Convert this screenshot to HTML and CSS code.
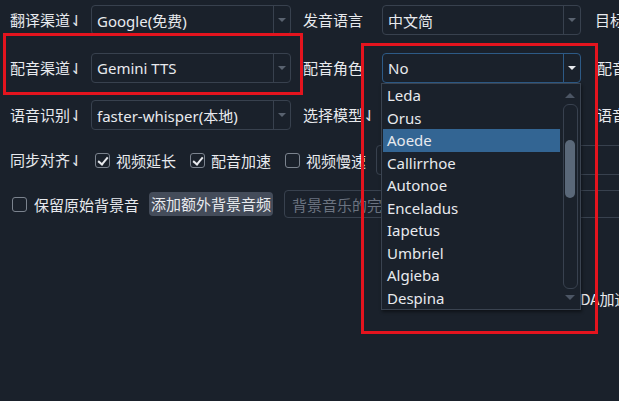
FILE: index.html
```html
<!DOCTYPE html>
<html lang="zh">
<head>
<meta charset="utf-8">
<link rel="stylesheet" href="styles.css">
</head>
<body>
<div class="panel">
  <div class="row r1">
    <span class="lbl">翻译渠道⇃</span>
    <div class="combo"><span class="val">Google(免费)</span><span class="drop"><i class="tri"></i></span></div>
    <span class="lbl lbl2">发音语言</span>
    <div class="combo combo2"><span class="val">中文简</span><span class="drop"><i class="tri"></i></span></div>
    <span class="lbl lbl3">目标语言</span>
  </div>
  <div class="row r2">
    <span class="lbl">配音渠道⇃</span>
    <div class="combo"><span class="val">Gemini TTS</span><span class="drop"><i class="tri"></i></span></div>
    <span class="lbl lbl2">配音角色</span>
    <div class="combo combo2 active"><span class="val">No</span><span class="drop"><i class="tri"></i></span></div>
    <span class="lbl lbl3 lbl3b">配音语速</span>
  </div>
  <div class="row r3">
    <span class="lbl">语音识别⇃</span>
    <div class="combo"><span class="val">faster-whisper(本地)</span><span class="drop"><i class="tri"></i></span></div>
    <span class="lbl lbl2">选择模型⇃</span>
    <div class="combo combo2"><span class="val"></span><span class="drop"><i class="tri"></i></span></div>
    <span class="lbl lbl3 lbl3b">语音切割</span>
  </div>
  <div class="row r4">
    <span class="lbl lbl4">同步对齐⇃</span>
    <label class="chk"><i class="box on"></i>视频延长</label>
    <label class="chk"><i class="box on"></i>配音加速</label>
    <label class="chk"><i class="box"></i>视频慢速</label>
    <div class="field wide"></div>
  </div>
  <div class="row r5">
    <label class="chk chk5"><i class="box"></i>保留原始背景音</label>
    <span class="btn">添加额外背景音频</span>
    <div class="field bgm"><span class="ph">背景音乐的完整路径</span></div>
  </div>
  <div class="row r6">
    <span class="cuda">CUDA加速</span>
  </div>
</div>

<div class="popup">
  <ul class="list">
    <li>Leda</li>
    <li>Orus</li>
    <li class="sel">Aoede</li>
    <li>Callirrhoe</li>
    <li>Autonoe</li>
    <li>Enceladus</li>
    <li>Iapetus</li>
    <li>Umbriel</li>
    <li>Algieba</li>
    <li>Despina</li>
  </ul>
  <div class="sbar">
    <span class="sarrow up"></span>
    <div class="groove"><div class="handle"></div></div>
    <span class="sarrow down"></span>
  </div>
</div>

<div class="mark mark1"></div>
<div class="mark mark2"></div>
</body>
</html>
```
FILE: styles.css
```css
html, body {
  margin: 0;
  padding: 0;
}
body {
  width: 619px;
  height: 401px;
  overflow: hidden;
  position: relative;
  background: #1a212b;
  color: #e8eaee;
  font-family: "Noto Sans", "Noto Sans CJK SC", sans-serif;
  font-size: 15px;
}
.panel {
  width: 900px;
  padding: 5px 0 0 10px;
}
.row {
  display: flex;
  align-items: center;
  height: 30px;
  white-space: nowrap;
}
.r2 { margin-top: 18px; }
.r3 { margin-top: 17px; }
.r4 { margin-top: 15px; }
.r5 { margin-top: 15px; height: 28px; }
.r6 { margin-top: 69px; height: 22px; }

.lbl {
  display: inline-block;
  width: 81px;
  line-height: 30px;
  font-family: "Noto Sans CJK SC", sans-serif;
}
.lbl2 { margin-left: 12px; width: 79px; }
.lbl3 { margin-left: 14px; }
.lbl3b { margin-left: 16px; }
.lbl4 { width: 85px; }

.combo {
  width: 200px;
  height: 30px;
  box-sizing: border-box;
  border: 1px solid #38414e;
  border-radius: 4px;
  display: flex;
  align-items: center;
  padding-left: 5px;
  flex: none;
}
.combo2 { width: 199px; }
.combo .val { flex: 1; overflow: hidden; }
.combo .drop {
  width: 16px;
  height: 100%;
  border-left: 1px solid #38414e;
  display: flex;
  align-items: center;
  justify-content: center;
}
.tri {
  width: 0;
  height: 0;
  border-left: 4px solid transparent;
  border-right: 4px solid transparent;
  border-top: 4px solid #59626f;
}
.combo.active { border-color: #2d5a86; }
.combo.active .drop { border-left-color: #2d5a86; }
.combo.active .tri { border-top-color: #e8eaee; }

.chk {
  display: flex;
  align-items: center;
  gap: 6px;
  margin-right: 14px;
  font-family: "Noto Sans CJK SC", sans-serif;
}
.chk5 { margin-left: 2px; gap: 7px; margin-right: 10px; }
.box {
  display: block;
  width: 15px;
  height: 15px;
  box-sizing: border-box;
  border: 1.5px solid #7b838e;
  border-radius: 3px;
  position: relative;
}
.box.on::after {
  content: "";
  position: absolute;
  left: 3.5px;
  top: 1px;
  width: 4px;
  height: 8px;
  border-right: 2px solid #e8eaee;
  border-bottom: 2px solid #e8eaee;
  transform: rotate(40deg);
}
.field {
  height: 30px;
  box-sizing: border-box;
  border: 1px solid #38414e;
  border-radius: 4px;
  flex: none;
}
.wide { width: 400px; margin-left: -4px; }
.bgm {
  width: 420px;
  height: 28px;
  margin-left: 11px;
  display: flex;
  align-items: center;
  padding-left: 7px;
}
.ph {
  color: #6b7380;
  font-family: "Noto Sans CJK SC", sans-serif;
}
.btn {
  display: inline-block;
  height: 24px;
  line-height: 24px;
  padding: 0 2px;
  width: 124px;
  box-sizing: border-box;
  background: #444c5a;
  border-radius: 4px;
  font-family: "Noto Sans CJK SC", sans-serif;
}
.cuda {
  margin-left: 550px;
  font-family: "Noto Sans CJK SC", sans-serif;
}

.popup {
  position: absolute;
  left: 381px;
  top: 83px;
  width: 200px;
  height: 227px;
  box-sizing: border-box;
  border: 1px solid #3a4350;
  background: #1a212b;
  display: flex;
  box-shadow: 1px 2px 3px rgba(0, 0, 0, 0.45);
}
.list {
  list-style: none;
  margin: 0;
  padding: 0 0 0 1px;
  flex: 1;
}
.list li {
  height: 22.5px;
  line-height: 22.5px;
  padding-left: 4px;
}
.list li.sel { background: #336593; }
.sbar {
  width: 20px;
  display: flex;
  flex-direction: column;
  align-items: center;
}
.sarrow {
  display: block;
  width: 0;
  height: 0;
  border-left: 5.5px solid transparent;
  border-right: 5.5px solid transparent;
}
.sarrow.up {
  margin-top: 9px;
  border-bottom: 5px solid #4b5564;
}
.sarrow.down {
  margin-top: 6px;
  border-top: 5px solid #4b5564;
}
.groove {
  margin-top: 6px;
  width: 15px;
  height: 185px;
  box-sizing: border-box;
  border: 1px solid #38414f;
  border-radius: 6px;
  padding: 35px 1.5px 0;
}
.handle {
  height: 58px;
  border-radius: 5px;
  background: #5a6879;
}

.mark {
  position: absolute;
  box-sizing: border-box;
  border: 3px solid #e4141e;
}
.mark1 { left: 3px; top: 33px; width: 300px; height: 62px; }
.mark2 { left: 361px; top: 43px; width: 237px; height: 291px; }
```
